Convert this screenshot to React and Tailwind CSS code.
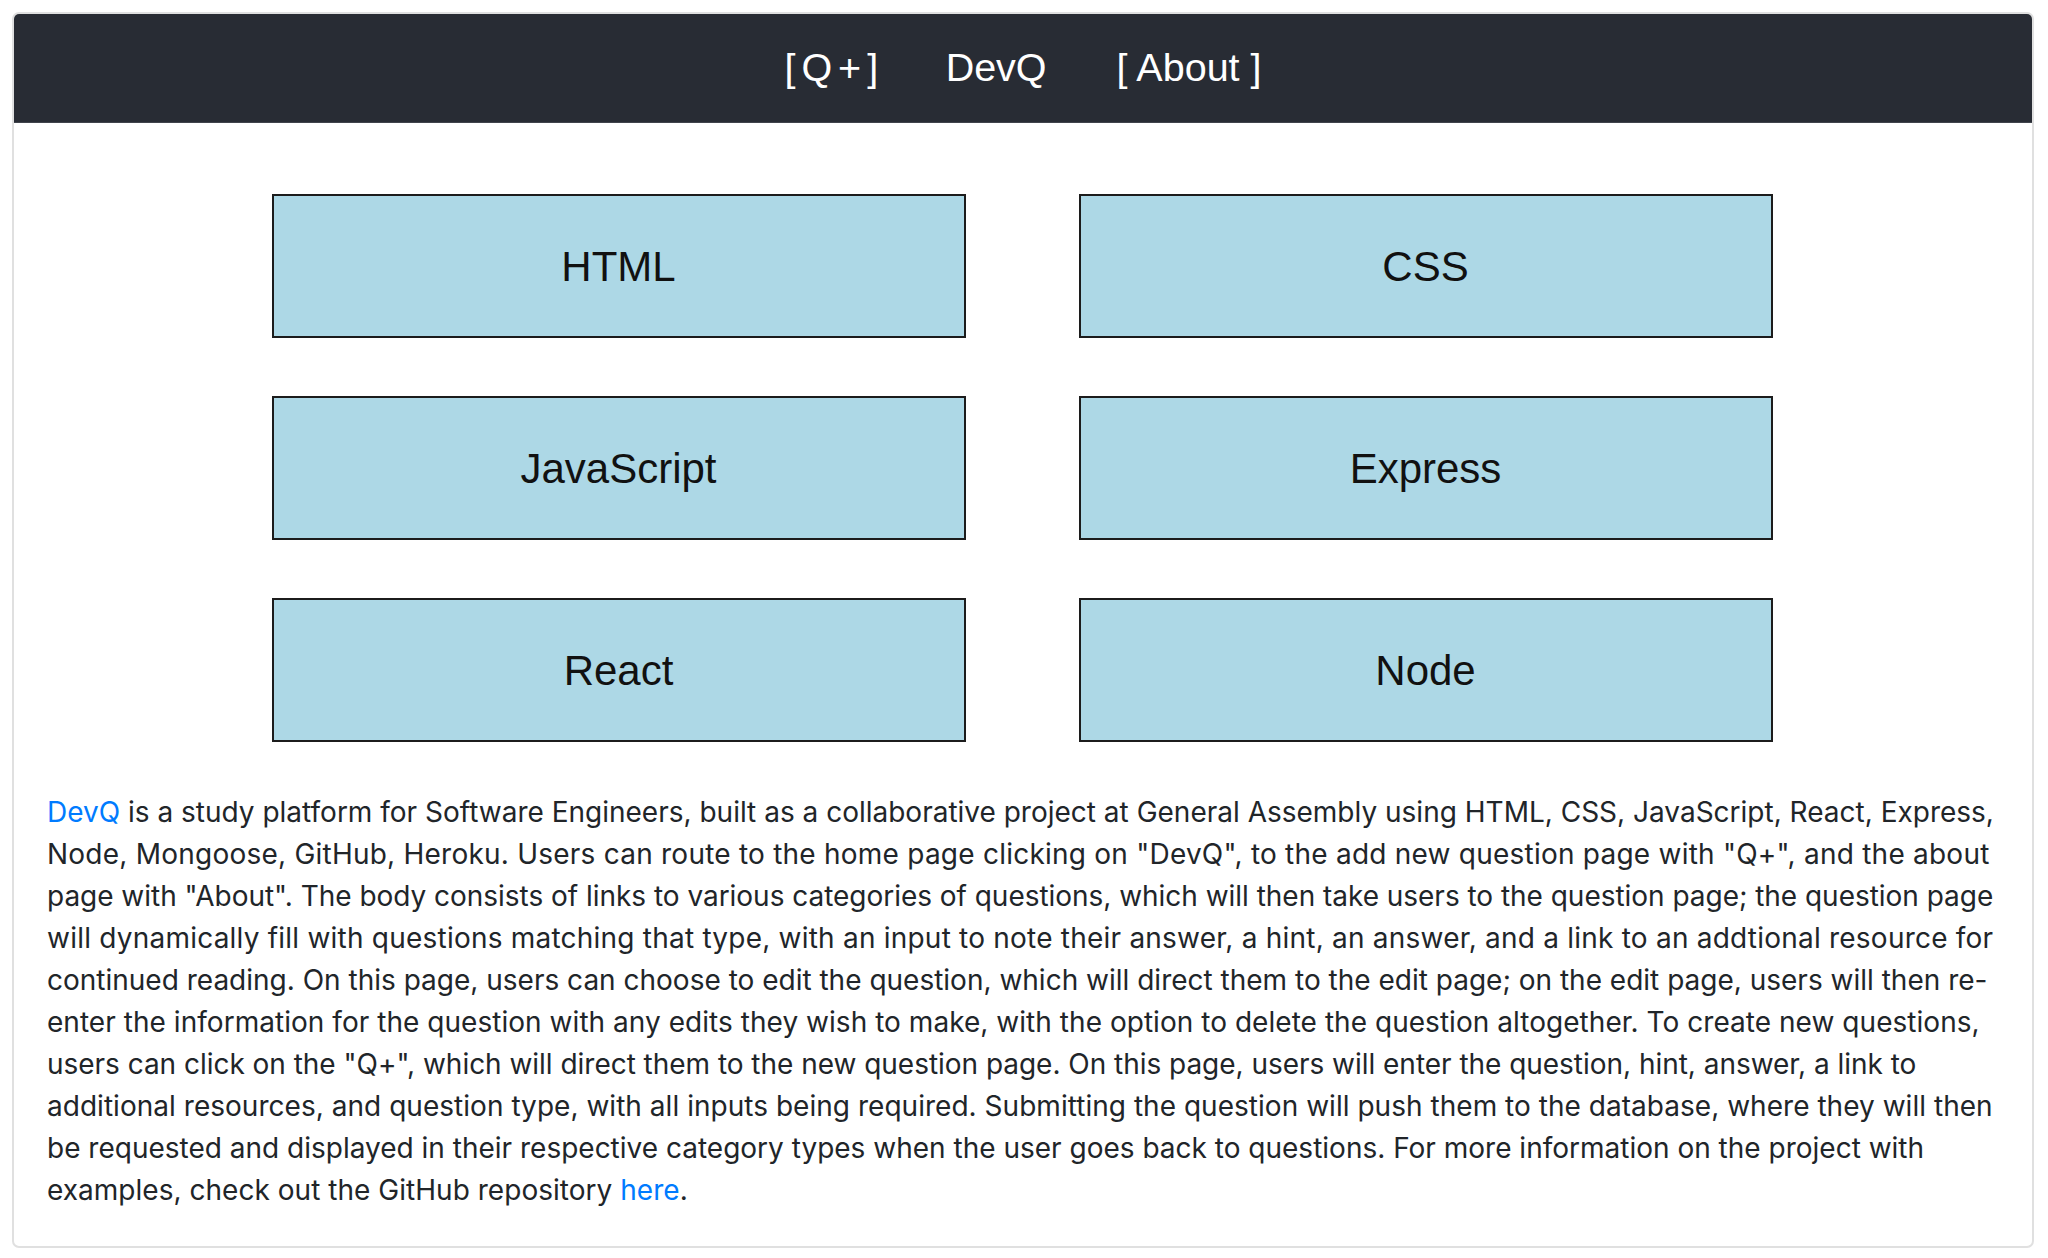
import React from "react";

const lines = [
  ['Node, Mongoose, GitHub, Heroku. Users can route to the home page clicking on "DevQ", to the add new question page with "Q+", and the about', "tracking-[0.23px]"],
  ['page with "About". The body consists of links to various categories of questions, which will then take users to the question page; the question page', "tracking-[-0.03px]"],
  ["will dynamically fill with questions matching that type, with an input to note their answer, a hint, an answer, and a link to an addtional resource for", "tracking-[0.22px]"],
  ["continued reading. On this page, users can choose to edit the question, which will direct them to the edit page; on the edit page, users will then re-", "tracking-[0px]"],
  ["enter the information for the question with any edits they wish to make, with the option to delete the question altogether. To create new questions,", "tracking-[0.04px]"],
  ['users can click on the "Q+", which will direct them to the new question page. On this page, users will enter the question, hint, answer, a link to', "tracking-[-0.03px]"],
  ["additional resources, and question type, with all inputs being required. Submitting the question will push them to the database, where they will then", "tracking-[0.03px]"],
  ["be requested and displayed in their respective category types when the user goes back to questions. For more information on the project with", "tracking-[0px]"],
];

const cats = ["HTML", "CSS", "JavaScript", "Express", "React", "Node"];

export default function App() {
  return (
    <div className="w-[2048px] h-[1258px] bg-white pt-[12px] pl-[12px]">
      <div className="w-[2022px] border-2 border-[#e0e0e0] rounded-[7px] overflow-hidden bg-white">
        <div className="h-[109px] bg-[#282c34] border-b border-[#40444c] flex items-center justify-center gap-[70px] text-white text-[39.5px] font-['Liberation_Sans',Arial,sans-serif]">
          <span className="tracking-[-2.5px]">[ Q + ]</span>
          <span>DevQ</span>
          <span>[ About ]</span>
        </div>
        <div className="pt-[71px] pb-[35px] px-[33px]">
          <div className="grid grid-cols-[694px_694px] justify-center gap-x-[113px] gap-y-[58px] -translate-x-[1px]">
            {cats.map((c) => (
              <div
                key={c}
                className="h-[144px] bg-[#add8e6] border-2 border-[#1c1c1c] flex items-center justify-center text-[42px] text-[#111] font-['Liberation_Sans',Arial,sans-serif]"
              >
                {c}
              </div>
            ))}
          </div>
          <p className="mt-[49px] text-[28px] leading-[42px] text-[#212529] whitespace-nowrap font-['Inter','Noto_Sans',sans-serif]">
            <span className="tracking-[0px]">
              <a className="text-[#007bff]">DevQ</a> is a study platform for Software Engineers, built as a collaborative project at General Assembly using HTML, CSS, JavaScript, React, Express,
            </span>
            {lines.map(([l, t], i) => (
              <React.Fragment key={i}>
                <br />
                <span className={t}>{l}</span>
              </React.Fragment>
            ))}
            <br />
            <span className="tracking-[0.03px]">
              examples, check out the GitHub repository <a className="text-[#007bff]">here</a>.
            </span>
          </p>
        </div>
      </div>
    </div>
  );
}
